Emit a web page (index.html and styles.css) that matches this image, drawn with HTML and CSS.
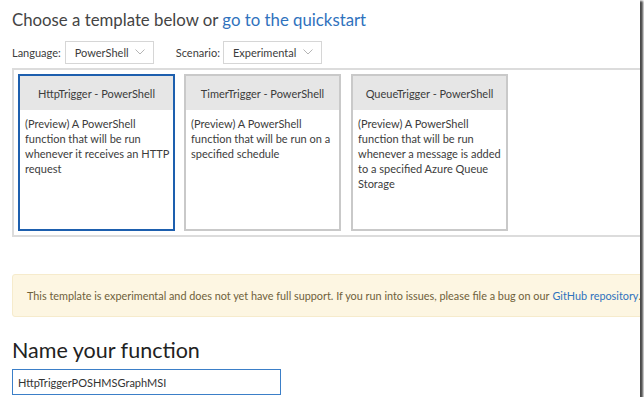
FILE: index.html
```html
<!DOCTYPE html>
<html lang="en">
<head>
  <meta charset="UTF-8" />
  <title>New Function</title>
  <link rel="stylesheet" href="styles.css">
</head>
<body>
  <div class="blade">
    <h1 class="title">Choose a template below or <a href="#">go to the quickstart</a></h1>

    <div class="filters">
      <label class="filter-label">Language:</label>
      <div class="dropdown lang">
        <span>PowerShell</span>
        <svg class="chevron" width="10" height="6" viewBox="0 0 10 6"><path d="M0.5 0.5 L5 5 L9.5 0.5" fill="none" stroke="#b5b5b5" stroke-width="1"/></svg>
      </div>
      <label class="filter-label scenario-label">Scenario:</label>
      <div class="dropdown scenario">
        <span>Experimental</span>
        <svg class="chevron" width="10" height="6" viewBox="0 0 10 6"><path d="M0.5 0.5 L5 5 L9.5 0.5" fill="none" stroke="#b5b5b5" stroke-width="1"/></svg>
      </div>
    </div>

    <div class="templates">
      <div class="card selected">
        <div class="card-head">HttpTrigger - PowerShell</div>
        <div class="card-body">(Preview) A PowerShell function that will be run whenever it receives an HTTP request</div>
      </div>
      <div class="card">
        <div class="card-head">TimerTrigger - PowerShell</div>
        <div class="card-body">(Preview) A PowerShell function that will be run on a specified schedule</div>
      </div>
      <div class="card">
        <div class="card-head">QueueTrigger - PowerShell</div>
        <div class="card-body">(Preview) A PowerShell function that will be run whenever a message is added to a specified Azure Queue Storage</div>
      </div>
    </div>

    <div class="warning">
      This template is experimental and does not yet have full support. If you run into issues, please file a bug on our <a href="#">GitHub repository</a>.
    </div>

    <h2 class="name-title">Name your function</h2>
    <input class="name-input" type="text" value="HttpTriggerPOSHMSGraphMSI" />
  </div>
</body>
</html>
```

FILE: styles.css
```css
:root {
  --link: #2f72bd;
  --text: #3c3c3c;
}

body {
  margin: 0;
  background: #fff;
  font-family: "Lato", "Noto Sans", sans-serif;
  color: var(--text);
}

.blade {
  width: 640px;
  height: 397px;
  overflow: hidden;
  background: #fff;
  box-shadow: 2px 2px 2px 1px #4a4a4a;
  box-sizing: border-box;
  padding: 8px 0 0 12px;
}

a {
  color: var(--link);
  text-decoration: none;
}

.title {
  margin: 0;
  font-size: 16.8px;
  font-weight: 400;
  line-height: 24px;
  color: #444;
}

.filters {
  display: flex;
  align-items: center;
  margin-top: 9px;
  height: 22px;
  font-size: 11px;
}

.filter-label {
  margin-right: 4px;
}

.scenario-label {
  margin-left: 22px;
  margin-right: 3px;
}

.dropdown {
  display: flex;
  align-items: center;
  justify-content: space-between;
  box-sizing: border-box;
  height: 23px;
  border: 1px solid #d6d6d6;
  padding: 0 8px 0 9px;
  font-size: 11px;
}

.dropdown.lang { width: 89px; }
.dropdown.scenario { width: 99px; }

.templates {
  display: flex;
  gap: 9px;
  margin-top: 5px;
  padding: 4px;
  border: 2px solid #dcdcdc;
  border-right: none;
  height: 157px;
}

.card {
  width: 157px;
  height: 157px;
  box-sizing: border-box;
  border: 2px solid #c9c9c9;
  flex: none;
}

.card + .card + .card {
  margin-left: 1px;
}

.card.selected {
  border-color: #1d5fae;
}

.card-head {
  height: 34px;
  background: #e6e6e6;
  display: flex;
  align-items: center;
  justify-content: center;
  font-size: 11px;
}

.card-body {
  padding: 6px 4px 0 5px;
  font-size: 11px;
  line-height: 15px;
}

.warning {
  margin-top: 37px;
  height: 43px;
  box-sizing: border-box;
  width: 660px;
  background: #fdf6e2;
  border: 1px solid #f6ebcc;
  border-radius: 3px;
  display: flex;
  align-items: center;
  padding-left: 14px;
  font-size: 10.85px;
  color: #6f613b;
  white-space: nowrap;
}

.warning a {
  margin-left: 3px;
}

.name-title {
  margin: 20px 0 0 0;
  font-size: 21.5px;
  font-weight: 400;
  line-height: 26px;
  color: #222;
}

.name-input {
  display: block;
  margin-top: 6px;
  width: 269px;
  height: 26px;
  box-sizing: border-box;
  border: 1px solid #3b7fc8;
  padding: 0 5px;
  font-family: inherit;
  font-size: 11px;
  color: #333;
  outline: none;
}
```
